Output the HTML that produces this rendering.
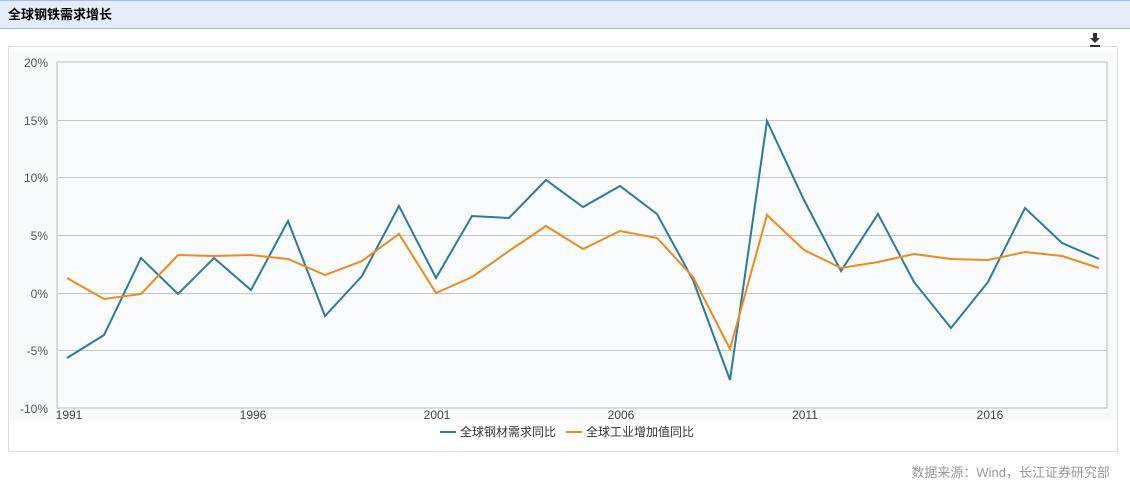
<!DOCTYPE html>
<html><head><meta charset="utf-8"><style>
body{margin:0;width:1130px;height:484px;background:#fff;font-family:"Liberation Sans","Noto Sans CJK SC",sans-serif;overflow:hidden;position:relative}
.hd{position:absolute;left:0;top:0;width:1130px;height:27px;background:#e3ecf8;border-top:1px solid #9dbcf0;border-bottom:1px solid #9dbcf0;font-size:13px;font-weight:bold;line-height:27px;padding-left:8px;box-sizing:border-box;height:29px}
.box{position:absolute;left:8px;top:46px;width:1110px;height:406px;border:1px solid #ddd;box-sizing:border-box;background:#fff}
.src{position:absolute;right:20px;top:462px;font-size:13px;color:#999}
</style></head><body>
<div class="hd">全球钢铁需求增长</div>
<div class="box"></div>
<svg width="1130" height="484" style="position:absolute;left:0;top:0" font-family="Liberation Sans, Noto Sans CJK SC, sans-serif">
<rect x="10" y="52" width="1106" height="368" fill="#f8f9fb"/>
<rect x="57" y="62" width="1050" height="346" fill="#fafbfd" stroke="#bbb"/>
<g stroke="#c4c6cc" stroke-width="1">
<line x1="57" x2="1107" y1="120.5" y2="120.5"/><line x1="57" x2="1107" y1="177.5" y2="177.5"/>
<line x1="57" x2="1107" y1="235.5" y2="235.5"/><line x1="57" x2="1107" y1="293.5" y2="293.5"/>
<line x1="57" x2="1107" y1="350.5" y2="350.5"/>
</g>
<g font-size="12" fill="#555" text-anchor="end">
<text x="48" y="67">20%</text><text x="48" y="125">15%</text><text x="48" y="182">10%</text>
<text x="48" y="240">5%</text><text x="48" y="298">0%</text><text x="48" y="355">-5%</text><text x="48" y="413">-10%</text>
</g>
<g font-size="12" fill="#444" text-anchor="middle">
<text x="69" y="419">1991</text><text x="253" y="419">1996</text><text x="437" y="419">2001</text>
<text x="621" y="419">2006</text><text x="805" y="419">2011</text><text x="990" y="419">2016</text>
</g>
<polyline fill="none" stroke="#2a7ba3" stroke-width="2" points="67,358 104,335 141,258 178,294 214,258 251,290 288,221 325,316 362,276 399,206 436,278 472,216 509,218 546,180 583,207 620,186 657,214 693,280 730,380 767,121 804,200 841,271 878,214 914,282 951,328 988,282 1025,208 1062,243 1099,259"/>
<polyline fill="none" stroke="#f08a1c" stroke-width="2" points="67,278 104,299 141,294 178,255 214,256 251,255 288,259 325,275 362,261 399,234 436,293 472,277 509,251 546,226 583,249 620,231 657,238 693,277 730,349 767,215 804,250 841,268 878,262 914,254 951,259 988,260 1025,252 1062,256 1099,268"/>
<line x1="440" x2="456" y1="432" y2="432" stroke="#2a7ba3" stroke-width="2"/>
<text x="460" y="436" font-size="12" fill="#333">全球钢材需求同比</text>
<line x1="566" x2="582" y1="432" y2="432" stroke="#f08a1c" stroke-width="2"/>
<text x="586" y="436" font-size="12" fill="#333">全球工业增加值同比</text>
<path d="M1093 33h4v5h3l-5 5-5-5h3z M1090 45h10v2h-10z" fill="#333"/>
</svg>
<div class="src">数据来源：Wind，长江证券研究部</div>
</body></html>
